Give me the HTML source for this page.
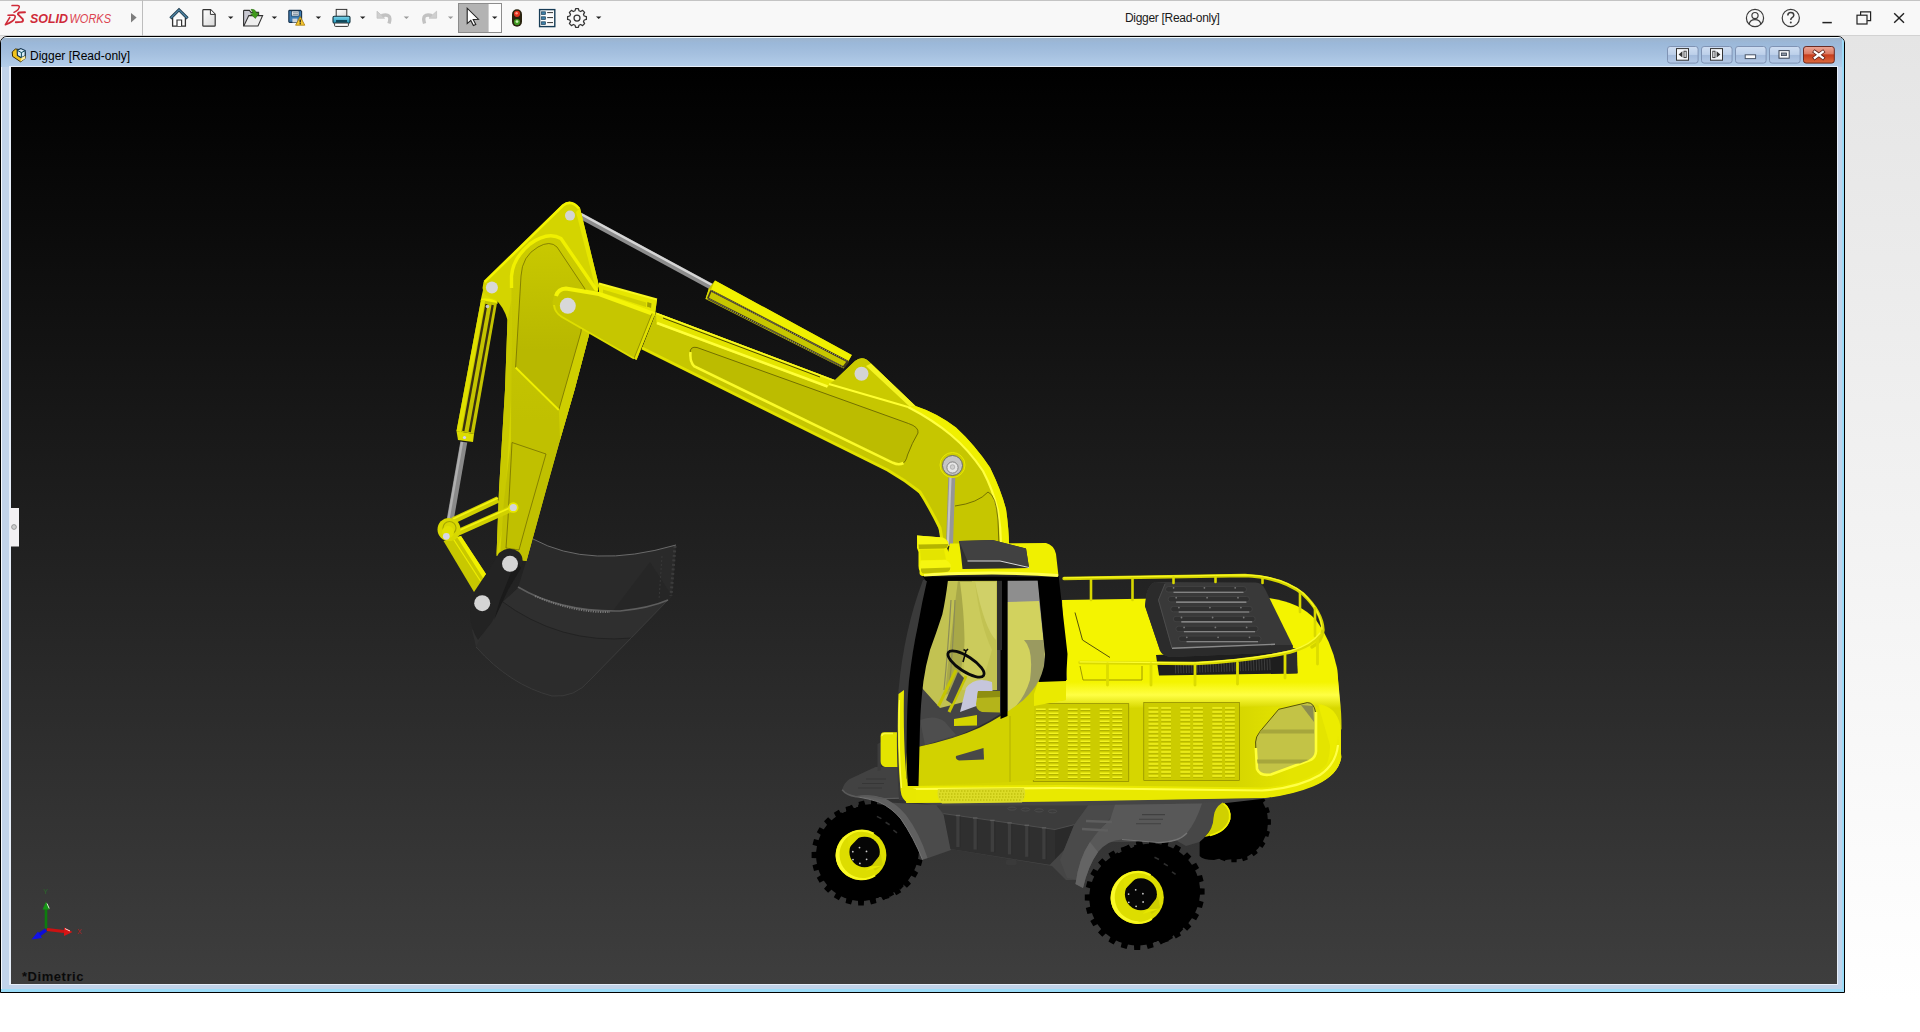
<!DOCTYPE html>
<html><head><meta charset="utf-8"><title>SOLIDWORKS</title>
<style>
*{margin:0;padding:0;box-sizing:border-box}
html,body{width:1920px;height:1032px;overflow:hidden;background:linear-gradient(#e5e5e5 36px,#ffffff 1000px);font-family:"Liberation Sans",sans-serif}
#top{position:absolute;left:0;top:0;width:1920px;height:36px;background:#f8f8f8;border-top:1px solid #c4c4c4;border-bottom:1px solid #d2d2d2}
#sep{position:absolute;left:142px;top:0;width:1px;height:36px;background:#bdbdbd}
#apptitle{position:absolute;left:1125px;top:11px;font-size:12px;color:#1a1a1a;letter-spacing:-.3px;white-space:nowrap}
#child{position:absolute;left:0;top:36px;width:1845px;height:957px;background:#c1d3ea;border:1px solid #000;border-radius:7px 7px 0 0;overflow:hidden}
#childtitle{position:absolute;left:0;top:0;width:1843px;height:30px;background:linear-gradient(#9db4cd 0,#9bb8d9 18%,#a5c0df 55%,#b4ceea 100%);border-top:1px solid #f2fcff}
#ctext{position:absolute;left:30px;top:48.5px;font-size:12px;color:#000;white-space:nowrap}
#vp{position:absolute;left:11px;top:67px;width:1826px;height:917px;background:linear-gradient(#000 0,#3e3e3e 100%);box-shadow:0 0 0 1px #e6eef9,-1px 0 0 1px #e6eef9}
#child:before{content:'';position:absolute;left:0;top:1px;width:1px;height:960px;background:#f4f8fd}
#child:after{content:'';position:absolute;left:0;top:0;width:1843px;height:955px;border-right:2px solid #9bdcf8;border-bottom:3px solid #9bdcf8;box-sizing:border-box}
#svgmain{position:absolute;left:0;top:0;width:1920px;height:1032px}
#dim{position:absolute;left:22px;top:969px;font-size:13px;font-weight:bold;color:#0a0a0a;letter-spacing:.55px}
</style></head><body>
<div id="top"></div><div id="sep"></div>
<div id="apptitle">Digger [Read-only]</div>
<div id="child"><div id="childtitle"></div></div>
<div id="ctext">Digger [Read-only]</div>
<div id="vp"></div>
<svg id="svgmain" viewBox="0 0 1920 1032">
<defs>
<linearGradient id="gbtn" x1="0" y1="0" x2="0" y2="1"><stop offset="0" stop-color="#cfdef2"/><stop offset=".48" stop-color="#bdd0ea"/><stop offset=".52" stop-color="#a3bbdc"/><stop offset="1" stop-color="#b4c9e6"/></linearGradient>
<linearGradient id="gred" x1="0" y1="0" x2="0" y2="1"><stop offset="0" stop-color="#eba697"/><stop offset=".45" stop-color="#dc7a62"/><stop offset=".5" stop-color="#c73c1c"/><stop offset="1" stop-color="#dc6b40"/></linearGradient>
<linearGradient id="gdoc" x1="0" y1="0" x2="1" y2="1"><stop offset="0" stop-color="#fff"/><stop offset="1" stop-color="#d8d8d8"/></linearGradient>
<linearGradient id="gprn" x1="0" y1="0" x2="0" y2="1"><stop offset="0" stop-color="#7fd8ee"/><stop offset="1" stop-color="#1c8fb4"/></linearGradient>
</defs>
<g id="logo" fill="none" stroke="#cf2a38" stroke-linecap="round" stroke-linejoin="round">
<path d="M12 5.6 L17.4 5.4 Q19.8 5.6 19.2 7.4 Q18.6 9.6 16.6 10.8 L14 12.3" stroke-width="1.5"/>
<path d="M8 15.3 L13.2 15 Q15.6 15.4 15.1 17.4 Q14.6 19.6 12.6 21 Q10 23 5.4 24.7 L9.8 17.4" stroke-width="1.6"/>
<path d="M25 12.3 L19.8 12.5 Q17.6 12.9 18 14.4 L22.8 19.2 Q23.6 21.4 21.4 21.9 L15.8 22.3" stroke-width="1.9"/>
</g>
<text x="30" y="23.2" font-family="Liberation Sans, sans-serif" font-size="12.2" font-weight="bold" font-style="italic" fill="#cf2a38" textLength="38" lengthAdjust="spacingAndGlyphs">SOLID</text>
<text x="69.5" y="23.2" font-family="Liberation Sans, sans-serif" font-size="12.2" font-style="italic" fill="#dc4450" textLength="41.5" lengthAdjust="spacingAndGlyphs">WORKS</text>
<path d="M131 13 L136.6 17.6 L131 22.4 Z" fill="#7d7d7d"/>
<!-- home -->
<g id="home">
<path d="M172.6 18 V26.2 H185.4 V18" fill="#fff" stroke="#333" stroke-width="1.3"/>
<path d="M177 26 V20 H181.6 V26" fill="#fff" stroke="#333" stroke-width="1.2"/>
<path d="M170.4 18.4 L179 9.8 L187.6 18.4" fill="none" stroke="#1f3a4c" stroke-width="3" stroke-linejoin="miter"/>
<path d="M170.8 18 L179 9.9 L187.2 18" fill="none" stroke="#4f86a6" stroke-width="1.3"/>
</g>
<!-- new doc -->
<path d="M203.6 9.6 H210.6 L215.2 14.2 V25.4 Q215.2 26.2 214.4 26.2 H203.6 Q202.8 26.2 202.8 25.4 V10.4 Q202.8 9.6 203.6 9.6 Z" fill="url(#gdoc)" stroke="#333" stroke-width="1.2"/>
<path d="M210.4 9.8 V14.4 H215" fill="#fff" stroke="#333" stroke-width="1"/>
<path d="M228 16.4 H233.4 L230.7 19 Z" fill="#222"/>
<!-- open -->
<g id="open">
<path d="M243.6 26 V11 Q243.6 10.4 244.2 10.4 H249.4 L251 12.4 H258.6 V15.4" fill="#c9c9d2" stroke="#333" stroke-width="1.1"/>
<path d="M243.8 26 L248.8 15.6 H262.6 L258 26 Z" fill="#eeeeee" stroke="#333" stroke-width="1.1"/>
<path d="M251 9.4 Q255.6 9 256.4 13.2 L258.8 13 L255.4 18.4 L250.6 14 L253 13.6 Q252.8 11.4 251 9.4 Z" fill="#3f9a1a" stroke="#2a6e10" stroke-width="0.6"/>
</g>
<path d="M271.7 16.4 H277.1 L274.4 19 Z" fill="#222"/>
<!-- save -->
<g id="save">
<path d="M289.6 10.4 H300.6 L301.6 11.4 V21.6 Q301.6 22.4 300.8 22.4 H289.6 Q288.8 22.4 288.8 21.6 V11.2 Q288.8 10.4 289.6 10.4 Z" fill="#3f7db4" stroke="#17324c" stroke-width="1.1"/>
<rect x="291.6" y="11" width="7.4" height="5" fill="#e8eef4" stroke="#17324c" stroke-width="0.6"/>
<path d="M292.8 12.8 H298 M292.8 14.4 H298" stroke="#55677a" stroke-width="0.7"/>
<rect x="292.4" y="18.6" width="5" height="3.8" fill="#cfd6dc"/>
<path d="M300.2 16.6 L304.8 25.2 H295.6 Z" fill="#f7c933" stroke="#a87a08" stroke-width="0.8" stroke-linejoin="round"/>
<path d="M300.2 19.4 V22.4" stroke="#222" stroke-width="1.3"/><circle cx="300.2" cy="23.8" r="0.75" fill="#222"/>
</g>
<path d="M315.7 16.4 H321.1 L318.4 19 Z" fill="#222"/>
<!-- print -->
<g id="print">
<rect x="336.2" y="9.4" width="10.6" height="8" fill="url(#gdoc)" stroke="#333" stroke-width="1"/>
<rect x="333" y="16.2" width="17" height="7" rx="1.4" fill="url(#gprn)" stroke="#10303c" stroke-width="1.1"/>
<rect x="336" y="20" width="11" height="2.2" fill="#0f4a5e"/>
<rect x="334.6" y="23" width="13.8" height="3.4" rx=".8" fill="#fff" stroke="#333" stroke-width="1"/>
</g>
<path d="M360 16.4 H365.4 L362.7 19 Z" fill="#222"/>
<!-- undo / redo (disabled) -->
<g fill="none" stroke="#c2c2c2" stroke-linejoin="round">
<path d="M381.5 15.6 Q392.5 12.6 389 23.6" stroke-width="3.4"/>
<path d="M377 11.2 L377 18.2 L384.6 18.2 Z" fill="#cfcfcf" stroke-width=".8"/>
<path d="M432.1 15.6 Q421.1 12.6 424.6 23.6" stroke-width="3.4"/>
<path d="M436.6 11.2 L436.6 18.2 L429 18.2 Z" fill="#cfcfcf" stroke-width=".8"/>
</g>
<path d="M403.7 16.4 H409.1 L406.4 19 Z" fill="#9a9a9a"/>
<path d="M447.9 16.4 H453.3 L450.6 19 Z" fill="#9a9a9a"/>
<!-- select button -->
<rect x="458.5" y="3.5" width="43" height="29" fill="#fcfcfc" stroke="#8c8c8c" stroke-width="1"/>
<rect x="459" y="4" width="29.6" height="28" fill="#b3b3b3"/>
<path d="M467.2 8.2 L467.2 23.6 L470.8 20.4 L473.4 25.6 L475.8 24.4 L473.2 19.4 L478.4 19.2 Z" fill="#fff" stroke="#222" stroke-width="1.1" stroke-linejoin="miter"/>
<path d="M492 16.4 H497.4 L494.7 19 Z" fill="#222"/>
<!-- traffic light -->
<rect x="512" y="9.2" width="10" height="17.6" rx="5" fill="#2a2410"/>
<circle cx="517" cy="13.8" r="3.1" fill="#e2321e"/><circle cx="516.6" cy="13.2" r="1.2" fill="#ff9a8a"/>
<circle cx="517" cy="22" r="3.1" fill="#3f9a22"/><circle cx="517" cy="21.6" r="1.4" fill="#c9efb0"/>
<!-- options list -->
<rect x="539.6" y="9.6" width="15.2" height="17" fill="#fbfbfb" stroke="#173c56" stroke-width="1.4"/>
<g fill="#3d7ea6" stroke="#173c56" stroke-width=".7"><rect x="541.6" y="11.8" width="3.8" height="2.6"/><rect x="541.6" y="16.8" width="3.8" height="2.6"/><rect x="541.6" y="21.8" width="3.8" height="2.6"/></g>
<path d="M547.2 12.6 H553 M547.2 17.6 H553 M547.2 22.6 H553" stroke="#333" stroke-width="1"/>
<!-- gear -->
<g id="gear" fill="none" stroke="#333" stroke-width="1.25">
<path d="M575.6 10 H578.4 L579 12.2 L580.6 12.9 L582.6 11.8 L584.6 13.8 L583.5 15.8 L584.2 17.4 L586.4 18 V20.8 L584.2 21.4 L583.5 23 L584.6 25 L582.6 27 L580.6 25.9 L579 26.6 L578.4 28.8 H575.6 L575 26.6 L573.4 25.9 L571.4 27 L569.4 25 L570.5 23 L569.8 21.4 L567.6 20.8 V18 L569.8 17.4 L570.5 15.8 L569.4 13.8 L571.4 11.8 L573.4 12.9 L575 12.2 Z" transform="translate(0,-1.4)" stroke-linejoin="round"/>
<circle cx="577" cy="18" r="3"/>
</g>
<path d="M596 16.4 H601.4 L598.7 19 Z" fill="#222"/>
<!-- right side app icons -->
<g fill="none" stroke="#3c3c3c" stroke-width="1.2">
<circle cx="1755" cy="18" r="8.6"/><circle cx="1755" cy="15.6" r="3.1"/><path d="M1749.2 24.2 Q1750 19.6 1755 19.6 Q1760 19.6 1760.8 24.2"/>
<circle cx="1790.8" cy="18" r="8.6"/>
<path d="M1787.8 15.4 Q1787.8 12.6 1790.8 12.6 Q1793.8 12.6 1793.8 15.2 Q1793.8 16.8 1791.8 17.8 Q1790.8 18.4 1790.8 20" stroke-width="1.5"/>
</g>
<circle cx="1790.8" cy="22.6" r="1" fill="#3c3c3c"/>
<path d="M1822.4 22.6 H1831.8" stroke="#222" stroke-width="1.5"/>
<path d="M1860.6 15 V11.8 H1870.6 V20.6 H1867.2" fill="none" stroke="#222" stroke-width="1.2"/>
<rect x="1857" y="15.2" width="10" height="8.8" fill="none" stroke="#222" stroke-width="1.2"/>
<path d="M1894.2 13.2 L1904 22.8 M1904 13.2 L1894.2 22.8" stroke="#222" stroke-width="1.4"/>
<!-- child window buttons -->
<g id="cbtn">
<rect x="1667.5" y="46.5" width="30.6" height="16.6" rx="2.6" fill="url(#gbtn)" stroke="#7f93b4" stroke-width="1"/>
<rect x="1701.5" y="46.5" width="30.6" height="16.6" rx="2.6" fill="url(#gbtn)" stroke="#7f93b4" stroke-width="1"/>
<rect x="1735.5" y="46.5" width="30.6" height="16.6" rx="2.6" fill="url(#gbtn)" stroke="#7f93b4" stroke-width="1"/>
<rect x="1769.5" y="46.5" width="30.6" height="16.6" rx="2.6" fill="url(#gbtn)" stroke="#7f93b4" stroke-width="1"/>
<rect x="1803.5" y="46.5" width="30.8" height="16.6" rx="2.6" fill="url(#gred)" stroke="#6a2a22" stroke-width="1"/>
<rect x="1676.5" y="48.6" width="12" height="11.6" fill="#f6f8fb" stroke="#333" stroke-width="1"/>
<path d="M1682.4 51.2 V57.6 L1678.6 54.4 Z" fill="#333"/><rect x="1684" y="51.2" width="2.2" height="6.4" fill="none" stroke="#333" stroke-width=".9"/>
<rect x="1710.5" y="48.6" width="12" height="11.6" fill="#f6f8fb" stroke="#333" stroke-width="1"/>
<path d="M1716.6 51.2 V57.6 L1720.4 54.4 Z" fill="#333"/><rect x="1712.8" y="51.2" width="2.2" height="6.4" fill="none" stroke="#333" stroke-width=".9"/>
<rect x="1745.2" y="54.8" width="10.4" height="3.8" fill="#fafbfd" stroke="#4a5668" stroke-width="1"/>
<rect x="1779" y="50.6" width="10.2" height="7.6" fill="#fafbfd" stroke="#3a4454" stroke-width="1"/>
<rect x="1781.6" y="53" width="5" height="2.6" fill="#8a94a4" stroke="#3a4454" stroke-width=".8"/>
<path d="M1814.8 51.8 L1822.8 57.8 M1822.8 51.8 L1814.8 57.8" stroke="#5a2018" stroke-width="3.8" stroke-linecap="square"/>
<path d="M1814.8 51.8 L1822.8 57.8 M1822.8 51.8 L1814.8 57.8" stroke="#fff" stroke-width="2.3" stroke-linecap="square"/>
</g>
<!-- child doc icon -->
<g id="docicon">
<path d="M12.2 52 L15.4 49 L20.2 49.6 L25.4 52.4 L25.2 58.4 L20.6 61.8 L12.6 56.4 Z" fill="#f2c41c" stroke="#3c2c00" stroke-width="1"/>
<path d="M17.2 50.2 L20.8 48.6 L25.2 50.6 L25.2 55.8 L21.4 57.8 L17.4 55.4 Z" fill="#d6ecf8" stroke="#0c2c4a" stroke-width="1.1"/>
<path d="M17.4 50.4 L21.4 52.6 L25 50.8 M21.4 52.6 V57.6" stroke="#0c4a5a" stroke-width="1" fill="none"/>
<path d="M21.4 57.8 L25.2 55.8 L25.2 58.4 L20.8 61.6 Z" fill="#fff0a0"/>
</g>
<!-- left handle -->
<rect x="10" y="508" width="9" height="38.5" fill="#f3f1f3"/>
<circle cx="14" cy="527" r="2.4" fill="#cfcfcf" stroke="#8a8a8a" stroke-width=".8"/>
<!-- triad -->
<g id="triad">
<path d="M46 928.5 V906" stroke="#0d7d0d" stroke-width="2.6"/>
<path d="M46 901.5 L49.5 909.5 H42.5 Z" fill="#149414"/>
<path d="M47 903.5 L49.2 908.5" stroke="#d9f2d0" stroke-width="1"/>
<path d="M47 929.5 L64 931.5" stroke="#cc1111" stroke-width="2.8"/>
<path d="M72.5 932 L64 927.5 V936 Z" fill="#d81414"/>
<path d="M65 928.6 L70 931" stroke="#ffd6d6" stroke-width="1"/>
<path d="M46 930 L36 937" stroke="#0c0cd8" stroke-width="3.4"/>
<path d="M31.5 939.5 L38 931.5 L42 938 Z" fill="#1212e6"/>
<text x="43.2" y="894" font-family="Liberation Sans, sans-serif" font-size="7" fill="#2a6a2a">Y</text>
<text x="77" y="934" font-family="Liberation Sans, sans-serif" font-size="7" fill="#b02020">X</text>
</g>

<g id="rearwheel">
<path d="M1265.9 819.0 L1270.9 819.2 L1270.9 824.8 L1265.9 825.0 Z M1265.2 829.9 L1269.9 831.8 L1268.3 837.1 L1263.5 835.6 Z M1261.4 840.0 L1265.4 843.4 L1262.4 847.9 L1258.2 844.9 Z M1255.0 848.4 L1257.8 852.9 L1253.6 856.2 L1250.5 851.9 Z M1246.5 854.2 L1247.8 859.4 L1243.0 861.2 L1241.2 856.0 Z M1236.8 856.8 L1236.6 862.3 L1231.4 862.3 L1231.2 856.8 Z M1226.8 856.0 L1225.0 861.2 L1220.2 859.4 L1221.5 854.2 Z M1250.5 792.1 L1253.6 787.8 L1257.8 791.1 L1255.0 795.6 Z M1258.2 799.1 L1262.4 796.1 L1265.4 800.6 L1261.4 804.0 Z M1263.5 808.4 L1268.3 806.9 L1269.9 812.2 L1265.2 814.1 Z" fill="#000"/>
<ellipse cx="1234" cy="822" rx="34" ry="37.5" fill="#000"/>
<ellipse cx="1226" cy="824" rx="27" ry="36" fill="#000"/>
<path d="M1199.6 830 L1199.6 856 Q1203 860 1214 860 L1245 852 L1225 820 Z" fill="#000"/>
</g>
<g id="chassis">
<path d="M905 800 L1270 798 L1200 806 L1180 830 L1160 842 L1100 842 L1078 880 L1066 880 L1052 866 L950 849 L937 806 Z" fill="#454545"/>
<g id="wheels">
<path d="M917.4 846.8 L923.4 847.1 L923.4 852.9 L917.4 853.2 Z M916.8 858.4 L922.5 860.3 L921.0 865.9 L915.1 864.6 Z M913.2 869.4 L918.2 872.7 L915.4 877.8 L910.1 875.0 Z M906.9 879.1 L911.0 883.7 L906.9 887.8 L902.5 883.7 Z M898.4 886.9 L901.2 892.3 L896.2 895.2 L893.0 890.1 Z M888.3 892.1 L889.5 898.0 L884.0 899.6 L882.2 893.7 Z M834.8 830.6 L829.8 827.3 L832.6 822.2 L837.9 825.0 Z M841.1 820.9 L837.0 816.3 L841.1 812.2 L845.5 816.3 Z M849.6 813.1 L846.8 807.7 L851.8 804.8 L855.0 809.9 Z M859.7 807.9 L858.5 802.0 L864.0 800.4 L865.8 806.3 Z M870.9 805.6 L871.2 799.5 L876.8 799.5 L877.1 805.6 Z M882.2 806.3 L884.0 800.4 L889.5 802.0 L888.3 807.9 Z M893.0 809.9 L896.2 804.8 L901.2 807.7 L898.4 813.1 Z M902.5 816.3 L906.9 812.2 L911.0 816.3 L906.9 820.9 Z M910.1 825.0 L915.4 822.2 L918.2 827.3 L913.2 830.6 Z M915.1 835.4 L921.0 834.1 L922.5 839.7 L916.8 841.6 Z" fill="#000"/>
<ellipse cx="861.0" cy="855.0" rx="44.9" ry="45.9" fill="#000"/>
<ellipse cx="862.6" cy="854.4" rx="44.9" ry="45.9" fill="#000"/>
<ellipse cx="864.2" cy="853.8" rx="44.9" ry="45.9" fill="#000"/>
<ellipse cx="865.9" cy="853.1" rx="44.9" ry="45.9" fill="#000"/>
<ellipse cx="867.5" cy="852.5" rx="44.9" ry="45.9" fill="#000"/>
<ellipse cx="869.1" cy="851.9" rx="44.9" ry="45.9" fill="#000"/>
<ellipse cx="870.8" cy="851.2" rx="44.9" ry="45.9" fill="#000"/>
<ellipse cx="872.4" cy="850.6" rx="44.9" ry="45.9" fill="#000"/>
<ellipse cx="874.0" cy="850.0" rx="44.9" ry="45.9" fill="#000"/>
<path d="M900.2 874.4 L905.2 877.7 L902.4 882.8 L897.1 880.0 Z M893.9 884.1 L898.0 888.7 L893.9 892.8 L889.5 888.7 Z M885.4 891.9 L888.2 897.3 L883.2 900.2 L880.0 895.1 Z M875.3 897.1 L876.5 903.0 L871.0 904.6 L869.2 898.7 Z M864.1 899.4 L863.8 905.5 L858.2 905.5 L857.9 899.4 Z M852.8 898.7 L851.0 904.6 L845.5 903.0 L846.7 897.1 Z M842.0 895.1 L838.8 900.2 L833.8 897.3 L836.6 891.9 Z M832.5 888.7 L828.1 892.8 L824.0 888.7 L828.1 884.1 Z M824.9 880.0 L819.6 882.8 L816.8 877.7 L821.8 874.4 Z M819.9 869.6 L814.0 870.9 L812.5 865.3 L818.2 863.4 Z M817.6 858.2 L811.6 857.9 L811.6 852.1 L817.6 851.8 Z M818.2 846.6 L812.5 844.7 L814.0 839.1 L819.9 840.4 Z M821.8 835.6 L816.8 832.3 L819.6 827.2 L824.9 830.0 Z M828.1 825.9 L824.0 821.3 L828.1 817.2 L832.5 821.3 Z M836.6 818.1 L833.8 812.7 L838.8 809.8 L842.0 814.9 Z M846.7 812.9 L845.5 807.0 L851.0 805.4 L852.8 811.3 Z M857.9 810.6 L858.2 804.5 L863.8 804.5 L864.1 810.6 Z M869.2 811.3 L871.0 805.4 L876.5 807.0 L875.3 812.9 Z" fill="#000"/>
<path d="M911.0 849.6 L916.4 849.9 L916.4 855.1 L911.0 855.4 Z M910.2 861.2 L915.4 862.9 L914.1 868.0 L908.7 866.8 Z M906.6 872.2 L911.2 875.2 L908.6 879.8 L903.7 877.2 Z M900.2 881.9 L903.9 886.0 L900.3 889.7 L896.2 886.0 Z M891.7 889.5 L894.2 894.5 L889.7 897.1 L886.8 892.4 Z M886.8 812.6 L889.7 807.9 L894.2 810.5 L891.7 815.5 Z M896.2 819.0 L900.3 815.3 L903.9 819.0 L900.2 823.1 Z M903.7 827.8 L908.6 825.2 L911.2 829.8 L906.6 832.8 Z M908.7 838.2 L914.1 837.0 L915.4 842.1 L910.2 843.8 Z" fill="#000"/>
<path d="M876.9 816.4 l4.5 2.2 M885.6 822.3 l4 2.4 M893.4 830.2 l3.6 2.6" stroke="#2e2e2e" stroke-width="1.6" fill="none"/>
<ellipse cx="861" cy="855" rx="25.4" ry="25.019" fill="#dddd00"/>
<path d="M873.7 833.7 A24.3 24.3 0 1 0 875.0 875.3" fill="none" stroke="#f6f618" stroke-width="2.2"/>
<path d="M853.4 833.2 A23.368 23.368 0 0 0 863.5 877.9 A19.05 19.05 0 0 1 853.4 833.2 Z" fill="#fafa28"/>
<ellipse cx="864.6" cy="852.0" rx="15.2" ry="15.2" fill="#060606"/>
<path d="M847.8 837.2 L861.5 834.7 L848.3 848.4 Z" fill="#e0e000"/>
<path d="M880.8 854.0 L871.2 866.2 L875.0 870.7 L882.8 865.2 Z" fill="#cfcf00"/>
<path d="M871.2 866.2 L882.8 865.7 L866.1 870.7 Z" fill="#e6e600"/>
<circle cx="866.6" cy="859.3" r="0.9" fill="#c8c8c8"/>
<circle cx="859.9" cy="863.4" r="0.9" fill="#c8c8c8"/>
<circle cx="853.0" cy="859.6" r="0.9" fill="#c8c8c8"/>
<circle cx="852.8" cy="851.7" r="0.9" fill="#c8c8c8"/>
<circle cx="859.5" cy="847.6" r="0.9" fill="#c8c8c8"/>
<circle cx="866.5" cy="851.4" r="0.9" fill="#c8c8c8"/>
<path d="M1198.5 888.2 L1204.6 888.5 L1204.6 894.5 L1198.5 894.8 Z M1197.8 900.3 L1203.6 902.1 L1202.0 908.0 L1196.1 906.7 Z M1194.0 911.8 L1199.1 915.1 L1196.1 920.3 L1190.7 917.6 Z M1187.3 921.9 L1191.4 926.4 L1187.1 930.7 L1182.6 926.6 Z M1178.3 930.0 L1181.0 935.4 L1175.8 938.4 L1172.5 933.3 Z M1167.4 935.4 L1168.7 941.3 L1162.8 942.9 L1161.0 937.1 Z M1110.4 871.2 L1105.3 867.9 L1108.3 862.7 L1113.7 865.4 Z M1117.1 861.1 L1113.0 856.6 L1117.3 852.3 L1121.8 856.4 Z M1126.1 853.0 L1123.4 847.6 L1128.6 844.6 L1131.9 849.7 Z M1137.0 847.6 L1135.7 841.7 L1141.6 840.1 L1143.4 845.9 Z M1148.9 845.2 L1149.2 839.1 L1155.2 839.1 L1155.5 845.2 Z M1161.0 845.9 L1162.8 840.1 L1168.7 841.7 L1167.4 847.6 Z M1172.5 849.7 L1175.8 844.6 L1181.0 847.6 L1178.3 853.0 Z M1182.6 856.4 L1187.1 852.3 L1191.4 856.6 L1187.3 861.1 Z M1190.7 865.4 L1196.1 862.7 L1199.1 867.9 L1194.0 871.2 Z M1196.1 876.3 L1202.0 875.0 L1203.6 880.9 L1197.8 882.7 Z" fill="#000"/>
<ellipse cx="1137.2" cy="897.5" rx="47.9" ry="47.9" fill="#000"/>
<ellipse cx="1139.1" cy="896.8" rx="47.9" ry="47.9" fill="#000"/>
<ellipse cx="1141.0" cy="896.0" rx="47.9" ry="47.9" fill="#000"/>
<ellipse cx="1142.8" cy="895.2" rx="47.9" ry="47.9" fill="#000"/>
<ellipse cx="1144.7" cy="894.5" rx="47.9" ry="47.9" fill="#000"/>
<ellipse cx="1146.6" cy="893.8" rx="47.9" ry="47.9" fill="#000"/>
<ellipse cx="1148.5" cy="893.0" rx="47.9" ry="47.9" fill="#000"/>
<ellipse cx="1150.3" cy="892.2" rx="47.9" ry="47.9" fill="#000"/>
<ellipse cx="1152.2" cy="891.5" rx="47.9" ry="47.9" fill="#000"/>
<path d="M1179.0 917.8 L1184.1 921.1 L1181.1 926.3 L1175.7 923.6 Z M1172.3 927.9 L1176.4 932.4 L1172.1 936.7 L1167.6 932.6 Z M1163.3 936.0 L1166.0 941.4 L1160.8 944.4 L1157.5 939.3 Z M1152.4 941.4 L1153.7 947.3 L1147.8 948.9 L1146.0 943.1 Z M1140.5 943.8 L1140.2 949.9 L1134.2 949.9 L1133.9 943.8 Z M1128.4 943.1 L1126.6 948.9 L1120.7 947.3 L1122.0 941.4 Z M1116.9 939.3 L1113.6 944.4 L1108.4 941.4 L1111.1 936.0 Z M1106.8 932.6 L1102.3 936.7 L1098.0 932.4 L1102.1 927.9 Z M1098.7 923.6 L1093.3 926.3 L1090.3 921.1 L1095.4 917.8 Z M1093.3 912.7 L1087.4 914.0 L1085.8 908.1 L1091.6 906.3 Z M1090.9 900.8 L1084.8 900.5 L1084.8 894.5 L1090.9 894.2 Z M1091.6 888.7 L1085.8 886.9 L1087.4 881.0 L1093.3 882.3 Z M1095.4 877.2 L1090.3 873.9 L1093.3 868.7 L1098.7 871.4 Z M1102.1 867.1 L1098.0 862.6 L1102.3 858.3 L1106.8 862.4 Z M1111.1 859.0 L1108.4 853.6 L1113.6 850.6 L1116.9 855.7 Z M1122.0 853.6 L1120.7 847.7 L1126.6 846.1 L1128.4 851.9 Z M1133.9 851.2 L1134.2 845.1 L1140.2 845.1 L1140.5 851.2 Z M1146.0 851.9 L1147.8 846.1 L1153.7 847.7 L1152.4 853.6 Z" fill="#000"/>
<path d="M1191.1 891.5 L1196.6 891.8 L1196.6 897.2 L1191.1 897.5 Z M1190.3 903.6 L1195.6 905.3 L1194.2 910.6 L1188.7 909.4 Z M1186.4 915.1 L1191.0 918.1 L1188.3 922.8 L1183.3 920.3 Z M1179.6 925.1 L1183.3 929.3 L1179.5 933.1 L1175.3 929.4 Z M1170.5 933.1 L1173.0 938.1 L1168.3 940.8 L1165.3 936.2 Z M1165.3 852.8 L1168.3 848.2 L1173.0 850.9 L1170.5 855.9 Z M1175.3 859.6 L1179.5 855.9 L1183.3 859.7 L1179.6 863.9 Z M1183.3 868.7 L1188.3 866.2 L1191.0 870.9 L1186.4 873.9 Z M1188.7 879.6 L1194.2 878.4 L1195.6 883.7 L1190.3 885.4 Z" fill="#000"/>
<path d="M1154.5 857.3 l4.5 2.2 M1163.8 863.5 l4 2.4 M1172.0 871.8 l3.6 2.6" stroke="#2e2e2e" stroke-width="1.6" fill="none"/>
<ellipse cx="1137.2" cy="897.5" rx="26.6" ry="26.201" fill="#dddd00"/>
<path d="M1150.5 875.2 A25.5 25.5 0 1 0 1151.8 918.8" fill="none" stroke="#f6f618" stroke-width="2.2"/>
<path d="M1129.2 874.6 A24.472 24.472 0 0 0 1139.9 921.4 A19.95 19.95 0 0 1 1129.2 874.6 Z" fill="#fafa28"/>
<ellipse cx="1140.9" cy="894.3" rx="16.0" ry="16.0" fill="#060606"/>
<path d="M1123.4 878.9 L1137.7 876.2 L1123.9 890.6 Z" fill="#e0e000"/>
<path d="M1157.9 896.4 L1147.8 909.2 L1151.8 914.0 L1160.1 908.1 Z" fill="#cfcf00"/>
<path d="M1147.8 909.2 L1160.1 908.7 L1142.5 914.0 Z" fill="#e6e600"/>
<circle cx="1143.1" cy="902.0" r="0.9" fill="#c8c8c8"/>
<circle cx="1136.1" cy="906.3" r="0.9" fill="#c8c8c8"/>
<circle cx="1128.8" cy="902.3" r="0.9" fill="#c8c8c8"/>
<circle cx="1128.6" cy="894.1" r="0.9" fill="#c8c8c8"/>
<circle cx="1135.7" cy="889.8" r="0.9" fill="#c8c8c8"/>
<circle cx="1142.9" cy="893.7" r="0.9" fill="#c8c8c8"/>
</g>
<path d="M879 802 L937 805 L944 816 L951 850 L922.5 860 Q914 838 900 818 Q890 806 879 802 Z" fill="#4b4b4b"/>
<path d="M856 796.5 Q870 799 879 802 Q892 808 901 819 Q914 838 922.5 859.6 L927.5 858 Q920 834 906 815 Q896 803 882 797 Q868 793 856 793 Z" fill="#606060"/>
<path d="M856 796.5 Q870 799 879 802 Q892 808 901 819 Q914 838 922.5 859.6" fill="none" stroke="#747474" stroke-width="1"/>
<path d="M842.2 789.8 Q844 783 849.2 779.3 L875.4 767.1 L903.3 766.2 L905 797 L882 797.5 Q868 793.5 856 796.8 Q846 795 842.2 789.8 Z" fill="#424242"/>
<path d="M842.2 789.8 Q846 795 856 796.8 Q868 794.5 882 798.5 L905 798" fill="none" stroke="#5a5a5a" stroke-width="1.6"/>
<path d="M866 779 H886 M862 783.5 H884 M858 788 H882" stroke="#363636" stroke-width="1.2" fill="none"/>
<path d="M877.5 744 L881 742 L881 770 L877.5 771 Z" fill="#3c3c3c"/>
<path d="M884 732.2 L901.5 732.2 L901.5 767 L885 767 Q880.6 766 880.6 761 L880.6 736.5 Q880.6 732.2 884 732.2 Z" fill="#e4e400"/>
<path d="M882 736 Q882 733.5 885 733.5 L893 733.5" stroke="#f8f840" stroke-width="1.4" fill="none"/>
<path d="M936.4 805.5 L1088.2 805.5 L1074.2 824.7 L1055 829.5 L943.4 813.6 Z" fill="#3c3c3c"/>
<path d="M943.4 813.6 L1055 829.5 L1055 859.6 L1049.8 864.8 L950.4 849.1 Z" fill="#2f2f2f"/>
<path d="M1055 829.5 L1074.2 824.7 L1064 850 L1055 859.6 Z" fill="#2a2a2a"/>
<path d="M943.4 813.6 L1055 829.5 L1074.2 824.7" fill="none" stroke="#505050" stroke-width="0.9"/>
<path d="M958.0 815.5 V847.0" stroke="#3e3e3e" stroke-width="3.4" fill="none"/>
<path d="M960.2 816.5 V847.3" stroke="#2c2c2c" stroke-width="0.9" fill="none"/>
<path d="M955.8 815.5 h4.4" stroke="#5c5c5c" stroke-width="1.4" fill="none"/>
<path d="M975.2 818.0 V849.5" stroke="#3e3e3e" stroke-width="3.4" fill="none"/>
<path d="M977.4 819.0 V849.8" stroke="#2c2c2c" stroke-width="0.9" fill="none"/>
<path d="M973.0 818.0 h4.4" stroke="#5c5c5c" stroke-width="1.4" fill="none"/>
<path d="M992.4 820.4 V851.9" stroke="#3e3e3e" stroke-width="3.4" fill="none"/>
<path d="M994.6 821.4 V852.2" stroke="#2c2c2c" stroke-width="0.9" fill="none"/>
<path d="M990.2 820.4 h4.4" stroke="#5c5c5c" stroke-width="1.4" fill="none"/>
<path d="M1009.6 822.9 V854.4" stroke="#3e3e3e" stroke-width="3.4" fill="none"/>
<path d="M1011.8 823.9 V854.6" stroke="#2c2c2c" stroke-width="0.9" fill="none"/>
<path d="M1007.4 822.9 h4.4" stroke="#5c5c5c" stroke-width="1.4" fill="none"/>
<path d="M1026.8 825.3 V856.8" stroke="#3e3e3e" stroke-width="3.4" fill="none"/>
<path d="M1029.0 826.3 V857.1" stroke="#2c2c2c" stroke-width="0.9" fill="none"/>
<path d="M1024.6 825.3 h4.4" stroke="#5c5c5c" stroke-width="1.4" fill="none"/>
<path d="M1044.0 827.8 V859.2" stroke="#3e3e3e" stroke-width="3.4" fill="none"/>
<path d="M1046.2 828.8 V859.5" stroke="#2c2c2c" stroke-width="0.9" fill="none"/>
<path d="M1041.8 827.8 h4.4" stroke="#5c5c5c" stroke-width="1.4" fill="none"/>
<ellipse cx="1012.0" cy="808.6" rx="4.2" ry="1.6" fill="none" stroke="#4e4e4e" stroke-width="0.8"/>
<ellipse cx="1025.5" cy="809.5" rx="4.2" ry="1.6" fill="none" stroke="#4e4e4e" stroke-width="0.8"/>
<ellipse cx="1039.0" cy="810.4" rx="4.2" ry="1.6" fill="none" stroke="#4e4e4e" stroke-width="0.8"/>
<ellipse cx="1052.5" cy="811.3" rx="4.2" ry="1.6" fill="none" stroke="#4e4e4e" stroke-width="0.8"/>
<rect x="1006" y="859.5" width="10.5" height="5.8" rx="2" fill="#3a3a3a"/>
<path d="M1088.2 805.5 L1120 804.5 L1110 818 L1090 842 L1078 880 L1067 878 L1060 860 L1074.2 824.7 Z" fill="#4a4a4a"/>
<path d="M1176 803 L1224 802 L1214 814 L1213 826 L1204 838 L1199.5 842 L1186 846 L1172 838 Z" fill="#474747"/>
<path d="M1115 804.8 L1202 803.5 Q1196 822 1187 833 Q1178 842.5 1158 842.5 L1122 839.5 Q1108 840 1098 852 Q1088 866 1083 888 L1075.5 884 Q1079 858 1090 842 Q1100 828 1110 820 Z" fill="#585858"/>
<path d="M1122 839.5 L1158 842.5 Q1178 842.5 1187 833" fill="none" stroke="#747474" stroke-width="1.2"/>
<path d="M1098 852 Q1088 866 1083 888 L1075.5 884 Q1079 858 1090 842 Z" fill="#646464"/>
<path d="M1142 814.6 H1165 M1139 819.2 H1163 M1136 823.8 H1161" stroke="#404040" stroke-width="1.1" fill="none"/>
<path d="M1082 829 L1108 830.5 M1086 821 L1112 822" stroke="#5e5e5e" stroke-width="2.4" fill="none"/>
</g>
<path d="M1222.5 802.5 Q1232 808 1230.5 819 Q1227 833 1204.7 837 Q1213.6 828 1213.4 818 Q1214 808 1222.5 802.5 Z" fill="#d0d000"/>
<path d="M1223.5 803.5 Q1231 809 1229.6 819 Q1226.5 831 1210 835.6" fill="none" stroke="#f2f200" stroke-width="1.6"/>
<defs><linearGradient id="gside" gradientUnits="userSpaceOnUse" x1="1236" y1="0" x2="1290" y2="0"><stop offset="0" stop-color="#d6d600"/><stop offset="1" stop-color="#e4e400"/></linearGradient><linearGradient id="gedge" gradientUnits="userSpaceOnUse" x1="0" y1="682" x2="0" y2="708"><stop offset="0" stop-color="#f4f400"/><stop offset=".5" stop-color="#ffff44"/><stop offset="1" stop-color="#d8d800"/></linearGradient></defs>
<g id="body">
<path d="M1062 600 L1255 597 Q1296 598 1316 620 Q1331 640 1337 668 L1339.5 700 L1066 700 Z" fill="#f4f400"/>
<path d="M1010 700 L1330 694 Q1340 705 1341 730 L1341 757 Q1339 776 1312 786 Q1290 795 1265 797.5 L1060 801 L906 803 L906 785 L1010 780 Z" fill="url(#gside)"/>
<path d="M1040 682 L1300 682 Q1326 680 1337 668 L1340 700 Q1341.5 712 1341.5 730 L1336 716 Q1330 706 1310 706 L1034 709 Z" fill="url(#gedge)"/>
<path d="M1318 704 Q1336 706 1340.5 726 L1341 757 Q1339 776 1312 786 Q1330 770 1330 745 Z" fill="#ecec00"/>
<rect x="1033.2" y="703.7" width="95.6" height="77.8" fill="#cccc00" stroke="#7e7a00" stroke-width="0.6"/>
<path d="M1035.9 710.5 h9.8 M1035.9 714.5 h9.8 M1035.9 718.5 h9.8 M1035.9 722.5 h9.8 M1035.9 726.5 h9.8 M1035.9 730.5 h9.8 M1035.9 734.5 h9.8 M1035.9 738.5 h9.8 M1035.9 742.5 h9.8 M1035.9 746.5 h9.8 M1035.9 750.5 h9.8 M1035.9 754.5 h9.8 M1035.9 758.5 h9.8 M1035.9 762.5 h9.8 M1035.9 766.5 h9.8 M1035.9 770.5 h9.8 M1035.9 774.5 h9.8 M1035.9 778.5 h9.8 M1048.6 710.5 h9.8 M1048.6 714.5 h9.8 M1048.6 718.5 h9.8 M1048.6 722.5 h9.8 M1048.6 726.5 h9.8 M1048.6 730.5 h9.8 M1048.6 734.5 h9.8 M1048.6 738.5 h9.8 M1048.6 742.5 h9.8 M1048.6 746.5 h9.8 M1048.6 750.5 h9.8 M1048.6 754.5 h9.8 M1048.6 758.5 h9.8 M1048.6 762.5 h9.8 M1048.6 766.5 h9.8 M1048.6 770.5 h9.8 M1048.6 774.5 h9.8 M1048.6 778.5 h9.8 M1067.8 710.5 h9.8 M1067.8 714.5 h9.8 M1067.8 718.5 h9.8 M1067.8 722.5 h9.8 M1067.8 726.5 h9.8 M1067.8 730.5 h9.8 M1067.8 734.5 h9.8 M1067.8 738.5 h9.8 M1067.8 742.5 h9.8 M1067.8 746.5 h9.8 M1067.8 750.5 h9.8 M1067.8 754.5 h9.8 M1067.8 758.5 h9.8 M1067.8 762.5 h9.8 M1067.8 766.5 h9.8 M1067.8 770.5 h9.8 M1067.8 774.5 h9.8 M1067.8 778.5 h9.8 M1080.5 710.5 h9.8 M1080.5 714.5 h9.8 M1080.5 718.5 h9.8 M1080.5 722.5 h9.8 M1080.5 726.5 h9.8 M1080.5 730.5 h9.8 M1080.5 734.5 h9.8 M1080.5 738.5 h9.8 M1080.5 742.5 h9.8 M1080.5 746.5 h9.8 M1080.5 750.5 h9.8 M1080.5 754.5 h9.8 M1080.5 758.5 h9.8 M1080.5 762.5 h9.8 M1080.5 766.5 h9.8 M1080.5 770.5 h9.8 M1080.5 774.5 h9.8 M1080.5 778.5 h9.8 M1099.7 710.5 h9.8 M1099.7 714.5 h9.8 M1099.7 718.5 h9.8 M1099.7 722.5 h9.8 M1099.7 726.5 h9.8 M1099.7 730.5 h9.8 M1099.7 734.5 h9.8 M1099.7 738.5 h9.8 M1099.7 742.5 h9.8 M1099.7 746.5 h9.8 M1099.7 750.5 h9.8 M1099.7 754.5 h9.8 M1099.7 758.5 h9.8 M1099.7 762.5 h9.8 M1099.7 766.5 h9.8 M1099.7 770.5 h9.8 M1099.7 774.5 h9.8 M1099.7 778.5 h9.8 M1112.4 710.5 h9.8 M1112.4 714.5 h9.8 M1112.4 718.5 h9.8 M1112.4 722.5 h9.8 M1112.4 726.5 h9.8 M1112.4 730.5 h9.8 M1112.4 734.5 h9.8 M1112.4 738.5 h9.8 M1112.4 742.5 h9.8 M1112.4 746.5 h9.8 M1112.4 750.5 h9.8 M1112.4 754.5 h9.8 M1112.4 758.5 h9.8 M1112.4 762.5 h9.8 M1112.4 766.5 h9.8 M1112.4 770.5 h9.8 M1112.4 774.5 h9.8 M1112.4 778.5 h9.8" stroke="#b2b200" stroke-width="1.2" fill="none"/>
<path d="M1035.9 709.2 h9.8 M1035.9 713.2 h9.8 M1035.9 717.2 h9.8 M1035.9 721.2 h9.8 M1035.9 725.2 h9.8 M1035.9 729.2 h9.8 M1035.9 733.2 h9.8 M1035.9 737.2 h9.8 M1035.9 741.2 h9.8 M1035.9 745.2 h9.8 M1035.9 749.2 h9.8 M1035.9 753.2 h9.8 M1035.9 757.2 h9.8 M1035.9 761.2 h9.8 M1035.9 765.2 h9.8 M1035.9 769.2 h9.8 M1035.9 773.2 h9.8 M1035.9 777.2 h9.8 M1048.6 709.2 h9.8 M1048.6 713.2 h9.8 M1048.6 717.2 h9.8 M1048.6 721.2 h9.8 M1048.6 725.2 h9.8 M1048.6 729.2 h9.8 M1048.6 733.2 h9.8 M1048.6 737.2 h9.8 M1048.6 741.2 h9.8 M1048.6 745.2 h9.8 M1048.6 749.2 h9.8 M1048.6 753.2 h9.8 M1048.6 757.2 h9.8 M1048.6 761.2 h9.8 M1048.6 765.2 h9.8 M1048.6 769.2 h9.8 M1048.6 773.2 h9.8 M1048.6 777.2 h9.8 M1067.8 709.2 h9.8 M1067.8 713.2 h9.8 M1067.8 717.2 h9.8 M1067.8 721.2 h9.8 M1067.8 725.2 h9.8 M1067.8 729.2 h9.8 M1067.8 733.2 h9.8 M1067.8 737.2 h9.8 M1067.8 741.2 h9.8 M1067.8 745.2 h9.8 M1067.8 749.2 h9.8 M1067.8 753.2 h9.8 M1067.8 757.2 h9.8 M1067.8 761.2 h9.8 M1067.8 765.2 h9.8 M1067.8 769.2 h9.8 M1067.8 773.2 h9.8 M1067.8 777.2 h9.8 M1080.5 709.2 h9.8 M1080.5 713.2 h9.8 M1080.5 717.2 h9.8 M1080.5 721.2 h9.8 M1080.5 725.2 h9.8 M1080.5 729.2 h9.8 M1080.5 733.2 h9.8 M1080.5 737.2 h9.8 M1080.5 741.2 h9.8 M1080.5 745.2 h9.8 M1080.5 749.2 h9.8 M1080.5 753.2 h9.8 M1080.5 757.2 h9.8 M1080.5 761.2 h9.8 M1080.5 765.2 h9.8 M1080.5 769.2 h9.8 M1080.5 773.2 h9.8 M1080.5 777.2 h9.8 M1099.7 709.2 h9.8 M1099.7 713.2 h9.8 M1099.7 717.2 h9.8 M1099.7 721.2 h9.8 M1099.7 725.2 h9.8 M1099.7 729.2 h9.8 M1099.7 733.2 h9.8 M1099.7 737.2 h9.8 M1099.7 741.2 h9.8 M1099.7 745.2 h9.8 M1099.7 749.2 h9.8 M1099.7 753.2 h9.8 M1099.7 757.2 h9.8 M1099.7 761.2 h9.8 M1099.7 765.2 h9.8 M1099.7 769.2 h9.8 M1099.7 773.2 h9.8 M1099.7 777.2 h9.8 M1112.4 709.2 h9.8 M1112.4 713.2 h9.8 M1112.4 717.2 h9.8 M1112.4 721.2 h9.8 M1112.4 725.2 h9.8 M1112.4 729.2 h9.8 M1112.4 733.2 h9.8 M1112.4 737.2 h9.8 M1112.4 741.2 h9.8 M1112.4 745.2 h9.8 M1112.4 749.2 h9.8 M1112.4 753.2 h9.8 M1112.4 757.2 h9.8 M1112.4 761.2 h9.8 M1112.4 765.2 h9.8 M1112.4 769.2 h9.8 M1112.4 773.2 h9.8 M1112.4 777.2 h9.8" stroke="#f4f420" stroke-width="1.5" fill="none"/>
<rect x="1143.8" y="702.4" width="95.6" height="78.0" fill="#cccc00" stroke="#7e7a00" stroke-width="0.6"/>
<path d="M1148.5 709.2 h9.8 M1148.5 713.2 h9.8 M1148.5 717.2 h9.8 M1148.5 721.2 h9.8 M1148.5 725.2 h9.8 M1148.5 729.2 h9.8 M1148.5 733.2 h9.8 M1148.5 737.2 h9.8 M1148.5 741.2 h9.8 M1148.5 745.2 h9.8 M1148.5 749.2 h9.8 M1148.5 753.2 h9.8 M1148.5 757.2 h9.8 M1148.5 761.2 h9.8 M1148.5 765.2 h9.8 M1148.5 769.2 h9.8 M1148.5 773.2 h9.8 M1148.5 777.2 h9.8 M1161.2 709.2 h9.8 M1161.2 713.2 h9.8 M1161.2 717.2 h9.8 M1161.2 721.2 h9.8 M1161.2 725.2 h9.8 M1161.2 729.2 h9.8 M1161.2 733.2 h9.8 M1161.2 737.2 h9.8 M1161.2 741.2 h9.8 M1161.2 745.2 h9.8 M1161.2 749.2 h9.8 M1161.2 753.2 h9.8 M1161.2 757.2 h9.8 M1161.2 761.2 h9.8 M1161.2 765.2 h9.8 M1161.2 769.2 h9.8 M1161.2 773.2 h9.8 M1161.2 777.2 h9.8 M1180.4 709.2 h9.8 M1180.4 713.2 h9.8 M1180.4 717.2 h9.8 M1180.4 721.2 h9.8 M1180.4 725.2 h9.8 M1180.4 729.2 h9.8 M1180.4 733.2 h9.8 M1180.4 737.2 h9.8 M1180.4 741.2 h9.8 M1180.4 745.2 h9.8 M1180.4 749.2 h9.8 M1180.4 753.2 h9.8 M1180.4 757.2 h9.8 M1180.4 761.2 h9.8 M1180.4 765.2 h9.8 M1180.4 769.2 h9.8 M1180.4 773.2 h9.8 M1180.4 777.2 h9.8 M1193.1 709.2 h9.8 M1193.1 713.2 h9.8 M1193.1 717.2 h9.8 M1193.1 721.2 h9.8 M1193.1 725.2 h9.8 M1193.1 729.2 h9.8 M1193.1 733.2 h9.8 M1193.1 737.2 h9.8 M1193.1 741.2 h9.8 M1193.1 745.2 h9.8 M1193.1 749.2 h9.8 M1193.1 753.2 h9.8 M1193.1 757.2 h9.8 M1193.1 761.2 h9.8 M1193.1 765.2 h9.8 M1193.1 769.2 h9.8 M1193.1 773.2 h9.8 M1193.1 777.2 h9.8 M1212.3 709.2 h9.8 M1212.3 713.2 h9.8 M1212.3 717.2 h9.8 M1212.3 721.2 h9.8 M1212.3 725.2 h9.8 M1212.3 729.2 h9.8 M1212.3 733.2 h9.8 M1212.3 737.2 h9.8 M1212.3 741.2 h9.8 M1212.3 745.2 h9.8 M1212.3 749.2 h9.8 M1212.3 753.2 h9.8 M1212.3 757.2 h9.8 M1212.3 761.2 h9.8 M1212.3 765.2 h9.8 M1212.3 769.2 h9.8 M1212.3 773.2 h9.8 M1212.3 777.2 h9.8 M1225.0 709.2 h9.8 M1225.0 713.2 h9.8 M1225.0 717.2 h9.8 M1225.0 721.2 h9.8 M1225.0 725.2 h9.8 M1225.0 729.2 h9.8 M1225.0 733.2 h9.8 M1225.0 737.2 h9.8 M1225.0 741.2 h9.8 M1225.0 745.2 h9.8 M1225.0 749.2 h9.8 M1225.0 753.2 h9.8 M1225.0 757.2 h9.8 M1225.0 761.2 h9.8 M1225.0 765.2 h9.8 M1225.0 769.2 h9.8 M1225.0 773.2 h9.8 M1225.0 777.2 h9.8" stroke="#b2b200" stroke-width="1.2" fill="none"/>
<path d="M1148.5 707.9 h9.8 M1148.5 711.9 h9.8 M1148.5 715.9 h9.8 M1148.5 719.9 h9.8 M1148.5 723.9 h9.8 M1148.5 727.9 h9.8 M1148.5 731.9 h9.8 M1148.5 735.9 h9.8 M1148.5 739.9 h9.8 M1148.5 743.9 h9.8 M1148.5 747.9 h9.8 M1148.5 751.9 h9.8 M1148.5 755.9 h9.8 M1148.5 759.9 h9.8 M1148.5 763.9 h9.8 M1148.5 767.9 h9.8 M1148.5 771.9 h9.8 M1148.5 775.9 h9.8 M1161.2 707.9 h9.8 M1161.2 711.9 h9.8 M1161.2 715.9 h9.8 M1161.2 719.9 h9.8 M1161.2 723.9 h9.8 M1161.2 727.9 h9.8 M1161.2 731.9 h9.8 M1161.2 735.9 h9.8 M1161.2 739.9 h9.8 M1161.2 743.9 h9.8 M1161.2 747.9 h9.8 M1161.2 751.9 h9.8 M1161.2 755.9 h9.8 M1161.2 759.9 h9.8 M1161.2 763.9 h9.8 M1161.2 767.9 h9.8 M1161.2 771.9 h9.8 M1161.2 775.9 h9.8 M1180.4 707.9 h9.8 M1180.4 711.9 h9.8 M1180.4 715.9 h9.8 M1180.4 719.9 h9.8 M1180.4 723.9 h9.8 M1180.4 727.9 h9.8 M1180.4 731.9 h9.8 M1180.4 735.9 h9.8 M1180.4 739.9 h9.8 M1180.4 743.9 h9.8 M1180.4 747.9 h9.8 M1180.4 751.9 h9.8 M1180.4 755.9 h9.8 M1180.4 759.9 h9.8 M1180.4 763.9 h9.8 M1180.4 767.9 h9.8 M1180.4 771.9 h9.8 M1180.4 775.9 h9.8 M1193.1 707.9 h9.8 M1193.1 711.9 h9.8 M1193.1 715.9 h9.8 M1193.1 719.9 h9.8 M1193.1 723.9 h9.8 M1193.1 727.9 h9.8 M1193.1 731.9 h9.8 M1193.1 735.9 h9.8 M1193.1 739.9 h9.8 M1193.1 743.9 h9.8 M1193.1 747.9 h9.8 M1193.1 751.9 h9.8 M1193.1 755.9 h9.8 M1193.1 759.9 h9.8 M1193.1 763.9 h9.8 M1193.1 767.9 h9.8 M1193.1 771.9 h9.8 M1193.1 775.9 h9.8 M1212.3 707.9 h9.8 M1212.3 711.9 h9.8 M1212.3 715.9 h9.8 M1212.3 719.9 h9.8 M1212.3 723.9 h9.8 M1212.3 727.9 h9.8 M1212.3 731.9 h9.8 M1212.3 735.9 h9.8 M1212.3 739.9 h9.8 M1212.3 743.9 h9.8 M1212.3 747.9 h9.8 M1212.3 751.9 h9.8 M1212.3 755.9 h9.8 M1212.3 759.9 h9.8 M1212.3 763.9 h9.8 M1212.3 767.9 h9.8 M1212.3 771.9 h9.8 M1212.3 775.9 h9.8 M1225.0 707.9 h9.8 M1225.0 711.9 h9.8 M1225.0 715.9 h9.8 M1225.0 719.9 h9.8 M1225.0 723.9 h9.8 M1225.0 727.9 h9.8 M1225.0 731.9 h9.8 M1225.0 735.9 h9.8 M1225.0 739.9 h9.8 M1225.0 743.9 h9.8 M1225.0 747.9 h9.8 M1225.0 751.9 h9.8 M1225.0 755.9 h9.8 M1225.0 759.9 h9.8 M1225.0 763.9 h9.8 M1225.0 767.9 h9.8 M1225.0 771.9 h9.8 M1225.0 775.9 h9.8" stroke="#f4f420" stroke-width="1.5" fill="none"/>
<path d="M1278.7 709.3 L1307.2 702.6 Q1314 702.5 1315.3 709 L1316 751.4 Q1315.5 757 1311.3 759.6 L1271 774.5 Q1260 776.5 1257 769 L1255.6 742 Q1255.6 737 1260 731.5 Z" fill="#c3c346"/>
<path d="M1316 712 L1316 751.4 Q1315.5 757 1311.3 759.6 L1271 774.5 Q1260 776.5 1257 769 L1255.8 748" fill="none" stroke="#ffff38" stroke-width="2.6"/>
<path d="M1255.8 748 L1255.6 742 Q1255.6 737 1260 731.5 L1278.7 709.3 L1307.2 702.6 Q1314 702.5 1315.5 712" fill="none" stroke="#4a4600" stroke-width="0.9"/>
<path d="M1301 705 L1313 706 L1314 722 Z" fill="#8c8c50"/>
<path d="M1262 729.6 H1314 V733.6 H1259 Z M1257 759.4 H1310 L1300 763.6 H1257.6 Z" fill="#a6a63c"/>
<path d="M904 786 Q903 794 907 803 L1060 801.5 L1265 798 Q1292 795 1313 786.5 Q1338 776 1341.5 757 L1338 735 Q1336 760 1318 772 Q1296 786 1262 787.5 L1060 785 Z" fill="#e9e900"/>
<path d="M908 789 L1060 788 L1262 790.5 Q1298 788 1320 775 Q1336 764 1338 745" stroke="#ffff48" stroke-width="2.2" fill="none"/>
<path d="M938 789 L1024 788 Q1027 795 1022 802.5 L942 803.5 Q936 798 938 789 Z" fill="#dcdc28"/>
<path d="M940 791 H1022 M939 794 H1024 M939 797 H1024 M941 800 H1022" stroke="#b4b400" stroke-width="1" stroke-dasharray="1.5 1.5" fill="none"/>
<path d="M1075 612.5 L1082.5 640 L1110 657.5" stroke="#55520a" stroke-width="1" fill="none"/>
<path d="M1080 666 L1083 680 H1142 V666" stroke="#8a8400" stroke-width="0.8" fill="none"/>
</g>
<g id="engine">
<path d="M1156 655 L1296 648 L1297.5 673.5 L1159 675.5 Z" fill="#1e1e1e"/>
<path d="M1175 668 L1272 664.5" stroke="#3e3e3e" stroke-width="11" stroke-dasharray="1 1.7" fill="none"/>
<path d="M1284 652 L1297 650 L1297.5 673 L1287 673.5 Z" fill="#2c2c2c"/>
<path d="M1155 582 L1255.6 582.6 Q1262 583 1265 589 L1292.5 645 Q1294 651.5 1287 652 L1172 657 Q1163 657 1160 650.5 L1145 606 L1146.5 594 Q1149 584 1155 582 Z" fill="#393939"/>
<path d="M1145 606 L1160 650.5 Q1163 657 1172 657 L1287 652 Q1294 651.5 1292.5 645 L1275.5 645 L1172 649 L1158 600 L1165 583 L1155 582 Q1149 584 1146.5 594 Z" fill="#2b2b2b"/>
<path d="M1172 648.2 L1275 644.3" stroke="#8a8a8a" stroke-width="1.4" fill="none"/>
<path d="M1165 584 L1158.5 600 L1172 648" stroke="#4c4c4c" stroke-width="1" fill="none"/>
<rect x="1165.5" y="586.6" width="81.0" height="5.4" rx="2.7" fill="#303030" stroke="#484848" stroke-width="0.7"/>
<path d="M1173.5 592.2 H1243.5" stroke="#9a9a9a" stroke-width="1.1" fill="none"/>
<circle cx="1173.6" cy="587.8" r="0.9" fill="#777"/>
<circle cx="1204.4" cy="587.8" r="0.9" fill="#777"/>
<circle cx="1235.2" cy="587.8" r="0.9" fill="#777"/>
<rect x="1168.1" y="596.5" width="81.3" height="5.4" rx="2.7" fill="#303030" stroke="#484848" stroke-width="0.7"/>
<path d="M1176.1 602.1 H1246.4" stroke="#9a9a9a" stroke-width="1.1" fill="none"/>
<circle cx="1176.2" cy="597.7" r="0.9" fill="#777"/>
<circle cx="1207.1" cy="597.7" r="0.9" fill="#777"/>
<circle cx="1238.0" cy="597.7" r="0.9" fill="#777"/>
<rect x="1170.7" y="606.4" width="81.6" height="5.4" rx="2.7" fill="#303030" stroke="#484848" stroke-width="0.7"/>
<path d="M1178.7 612.0 H1249.3" stroke="#9a9a9a" stroke-width="1.1" fill="none"/>
<circle cx="1178.9" cy="607.6" r="0.9" fill="#777"/>
<circle cx="1209.9" cy="607.6" r="0.9" fill="#777"/>
<circle cx="1240.9" cy="607.6" r="0.9" fill="#777"/>
<rect x="1173.3" y="616.3" width="81.9" height="5.4" rx="2.7" fill="#303030" stroke="#484848" stroke-width="0.7"/>
<path d="M1181.3 621.9 H1252.2" stroke="#9a9a9a" stroke-width="1.1" fill="none"/>
<circle cx="1181.5" cy="617.5" r="0.9" fill="#777"/>
<circle cx="1212.6" cy="617.5" r="0.9" fill="#777"/>
<circle cx="1243.7" cy="617.5" r="0.9" fill="#777"/>
<rect x="1175.9" y="626.2" width="82.2" height="5.4" rx="2.7" fill="#303030" stroke="#484848" stroke-width="0.7"/>
<path d="M1183.9 631.8 H1255.1" stroke="#9a9a9a" stroke-width="1.1" fill="none"/>
<circle cx="1184.1" cy="627.4" r="0.9" fill="#777"/>
<circle cx="1215.4" cy="627.4" r="0.9" fill="#777"/>
<circle cx="1246.6" cy="627.4" r="0.9" fill="#777"/>
<rect x="1178.5" y="636.1" width="82.5" height="5.4" rx="2.7" fill="#303030" stroke="#484848" stroke-width="0.7"/>
<path d="M1186.5 641.7 H1258.0" stroke="#9a9a9a" stroke-width="1.1" fill="none"/>
<circle cx="1186.8" cy="637.3" r="0.9" fill="#777"/>
<circle cx="1218.1" cy="637.3" r="0.9" fill="#777"/>
<circle cx="1249.5" cy="637.3" r="0.9" fill="#777"/>
</g>
<g id="rail" stroke-linecap="round">
<path d="M1064 578.5 L1245 575.5 Q1282 577 1303 594 Q1322 612 1323 630 Q1322 642 1312 647" stroke="#d4d400" stroke-width="3.4" fill="none"/>
<path d="M1064 577.8 L1245 574.8 Q1282 576 1303 593 Q1321 611 1322 629" stroke="#f8f820" stroke-width="1.3" fill="none"/>
<line x1="1091" y1="579" x2="1091" y2="600" stroke="#d8d800" stroke-width="2.6"/>
<line x1="1132.5" y1="578.5" x2="1132.5" y2="600" stroke="#d8d800" stroke-width="2.6"/>
<line x1="1173.5" y1="577.5" x2="1173.5" y2="583" stroke="#d8d800" stroke-width="2.6"/>
<line x1="1215.5" y1="577" x2="1215.5" y2="582" stroke="#d8d800" stroke-width="2.6"/>
<line x1="1262.5" y1="578" x2="1262.5" y2="583" stroke="#d8d800" stroke-width="2.6"/>
<line x1="1300" y1="593" x2="1300" y2="612" stroke="#d8d800" stroke-width="2.6"/>
<line x1="1315" y1="608" x2="1315" y2="636" stroke="#d8d800" stroke-width="2.6"/>
<path d="M1080 662.5 L1195 663.5 Q1250 661 1290 652 Q1312 646 1321 634" stroke="#dada00" stroke-width="3.4" fill="none"/>
<path d="M1080 661.8 L1195 662.8 Q1250 660 1290 651 Q1311 645 1320 633" stroke="#fcfc30" stroke-width="1.3" fill="none"/>
<line x1="1107.5" y1="664" x2="1107.5" y2="685" stroke="#dcdc00" stroke-width="2.8"/>
<line x1="1151" y1="664" x2="1151" y2="685" stroke="#dcdc00" stroke-width="2.8"/>
<line x1="1195" y1="665" x2="1195" y2="685" stroke="#dcdc00" stroke-width="2.8"/>
<line x1="1237.5" y1="663" x2="1237.5" y2="684" stroke="#dcdc00" stroke-width="2.8"/>
<line x1="1285" y1="655" x2="1285" y2="678" stroke="#dcdc00" stroke-width="2.8"/>
<line x1="1317.5" y1="640" x2="1317.5" y2="664" stroke="#dcdc00" stroke-width="2.8"/>
</g>
<g id="bucket">
<path d="M533 539 Q590 570 676 545 L672 596 Q668 603 660 603 Q600 618 565 610 Q535 600 518 588 Z" fill="#2a2a2a"/>
<path d="M650 562 L672 596 L664 602 L612 612 Z" fill="#262626"/>
<path d="M533 539 Q590 570 676 545" fill="none" stroke="#6a6a6a" stroke-width="1"/>
<path d="M675 546 L671 596" fill="none" stroke="#3c3c3c" stroke-width="3" stroke-dasharray="2 2.5"/>
<path d="M662 556 L659 600" fill="none" stroke="#383838" stroke-width="1" stroke-dasharray="2 2"/>
<path d="M518 588 Q560 612 620 611 Q650 608 668 600 L636 634 L590 680 Q575 698 552 696 Q510 685 476 647 L472 630 Z" fill="#2f2f2f"/>
<path d="M500 600 Q560 645 632 638 L590 680 Q575 698 552 696 Q510 685 476 647 Z" fill="#2c2c2c"/>
<path d="M500 600 Q560 645 632 638" fill="none" stroke="#222" stroke-width="1"/>
<path d="M476 647 Q510 685 552 696 Q575 698 590 680 L668 600" fill="none" stroke="#3a3a3a" stroke-width="1"/>
<path d="M518 587 Q560 612 620 611 Q650 608 668 600" fill="none" stroke="#5e5e5e" stroke-width="1.6"/>
<path d="M535 596 Q575 613 610 612" fill="none" stroke="#777" stroke-width="2" stroke-dasharray="1.2 1.2"/>
</g>
<g id="rod1">
<line x1="580" y1="215.5" x2="713" y2="287.5" stroke="#8c8c8c" stroke-width="6"/>
<line x1="580.8" y1="214" x2="713.8" y2="286" stroke="#d6d6d6" stroke-width="2.4"/>
</g>
<g id="cyl2">
<path d="M483 290 L498 296 L497.5 304 L480.5 301 Z" fill="#dada00"/>
<ellipse cx="489" cy="301.2" rx="8.2" ry="2.4" transform="rotate(10 489 301.2)" fill="#f2f200"/>
<path d="M481 300 L497 303 L474 434 L456.5 431 Z" fill="#c4c400"/>
<path d="M481 300 L485 301 L461 432 L456.5 431 Z" fill="#e0e000"/>
<path d="M486.5 304 L463.3 431" stroke="#3a3010" stroke-width="2.3" fill="none"/>
<path d="M492.7 305 L469.7 432" stroke="#3a3010" stroke-width="2.3" fill="none"/>
<path d="M456.5 431 L474 434 L473 442 L458 440 Z" fill="#dcdc00"/>
<circle cx="464.5" cy="437.5" r="1.6" fill="#d0d0ff"/>
<circle cx="487.5" cy="306.5" r="1.8" fill="#c8c8c8"/>
<line x1="463.8" y1="442" x2="449.8" y2="522" stroke="#8a8a8a" stroke-width="7"/>
<line x1="462" y1="442" x2="448" y2="522" stroke="#b0b0b0" stroke-width="2.4"/>
</g>
<defs><linearGradient id="gst1" gradientUnits="userSpaceOnUse" x1="0" y1="240" x2="0" y2="420"><stop offset="0" stop-color="#cccc00"/><stop offset="1" stop-color="#c0c000"/></linearGradient><linearGradient id="gst2" gradientUnits="userSpaceOnUse" x1="0" y1="245" x2="0" y2="350"><stop offset="0" stop-color="#c8c800"/><stop offset="1" stop-color="#b8b800"/></linearGradient></defs>
<g id="stick">
<path d="M483.5 282 L562.5 204.5 Q571 197.5 580 208 L599 286 L589 335 L574.5 390 L560 440 L546 490 L526.5 561 L496.5 556 L499 490 L505 390 L507.5 320 Q504 307 495 299 Q483 297 482.5 288 Z" fill="#d4d400"/>
<path d="M484.5 282 L563 205.5 Q571 199 579 208.5" fill="none" stroke="#f4f400" stroke-width="2.6"/>
<path d="M576 212 L580 208 L599 286 L596 290 Z" fill="#e6e600"/>
<path d="M507.5 320 L511.5 300 L511 400 L504 520 L496.5 556 L499 490 L505 390 Z" fill="#c9c900"/>
<path d="M511 440 L511.5 276 Q513 258 530 244 Q548 231 561 238.5 L597 291 L589 335 L574.5 390 L560 440 L546 490 L526.5 561 L500 557 L504 500 Z" fill="url(#gst1)"/>
<path d="M511.5 288 L511.5 276 Q513 258 530 244 Q548 231 561 238.5 L597 291" fill="none" stroke="#f0f000" stroke-width="3.4"/>
<path d="M585 289 L597 291 L589 335 L574.5 390 L560 440 L558.8 410 L581 332 Z" fill="#cece00"/>
<path d="M521 276 Q522 256 538 247 Q550 240 557 247 L585 289 L581 332 L558.8 410 L515.6 367.5 Z" fill="url(#gst2)" stroke="#6a6400" stroke-width="0.7"/>
<path d="M515.6 367.5 L558.8 410" stroke="#f0f000" stroke-width="1.8" fill="none"/>
<path d="M512 442.5 L546 454 L527.5 519 L519 550 L506 548 L508 519 Z" fill="none" stroke="#6a6400" stroke-width="0.7"/>
</g>
<circle cx="570" cy="215.6" r="5" fill="#d4d4d4"/>
<circle cx="491.9" cy="287.5" r="6" fill="#d8d8d8"/>
<g id="boom">
<path d="M656 312.5 L835 380 L855 361 Q863 354.5 871 363.5 L915.5 406 Q937 413 956 427.5 Q975 445 990 467.5 Q1001 490 1006 509 Q1009 530 1009 546 L943 546 Q940 528 930 508.5 Q920 492 905 480 Q896 474 887.5 470 L642 348 Z" fill="#c6c600"/>
<path d="M656 312.5 L835 380 L827 387.5 L656.5 324 Z" fill="#e4e400"/>
<path d="M657 323 L827.5 386.5" stroke="#ffff38" stroke-width="2.6" fill="none"/>
<path d="M656.5 313.5 L835 381" stroke="#f8f820" stroke-width="1.6" fill="none"/>
<path d="M663 318 L820 377" stroke="#4a4600" stroke-width="1" fill="none"/>
<path d="M835 380 L855 361 Q863 354.5 871 363.5 L915.5 406 L908 406.5 L829 384 Z" fill="#caca00"/>
<path d="M871 363.5 L915.5 406 L910 407 L866 366 Z" fill="#f4f420"/>
<path d="M829 384 L908 407" stroke="#ffff30" stroke-width="2" fill="none"/>
<path d="M915.5 406 Q937 413 956 427.5 Q975 445 990 467.5 Q1001 490 1006 509 Q1009 530 1009 546 L1001 546 Q1001 528 998 511 Q993 490 983 471 Q969 450 951 435 Q933 420 908 407 Z" fill="#f0f000"/>
<path d="M908 407 Q933 420 951 435 Q969 450 983 471 Q993 490 998 511 Q1001 528 1001 546" stroke="#ffff40" stroke-width="2.2" fill="none"/>
<path d="M642 348 L887.5 470 Q905 480 920 492 Q930 508 940 528 L943 546" stroke="#e2e200" stroke-width="3" fill="none"/>
<path d="M690 353 Q690 346 697 347.5 L908.5 423.5 Q919 427 918 433 Q912 443 907.5 455 Q906 462 902 464 Q898 465 893 462.5 L694 366 Q690 363 690 358 Z" fill="#bcbc00" stroke="#5e5a00" stroke-width="0.8"/>
<path d="M690.5 352 Q689.5 362 694.5 366.5 L893 462.8 Q899 465.5 903.5 463" stroke="#fafa28" stroke-width="2.6" fill="none"/>
<path d="M955 506 Q978 503 988 492 Q996 495 998 520 L999 546" stroke="#5e5a00" stroke-width="0.8" fill="none"/>
</g>
<g id="pin2">
<line x1="952" y1="470" x2="949.5" y2="545" stroke="#969696" stroke-width="7"/>
<line x1="950.8" y1="470" x2="947.8" y2="545" stroke="#c4c4c4" stroke-width="2.2"/>
<circle cx="952.5" cy="465" r="12.5" fill="#cdcd00" stroke="#e8e800" stroke-width="1"/>
<circle cx="952.5" cy="465.5" r="10" fill="#c4c4c4" stroke="#6a6a6a" stroke-width="1"/>
<circle cx="952.5" cy="467.5" r="5.6" fill="#e6e6e6" stroke="#7a7a7a" stroke-width="0.9"/>
<circle cx="952.5" cy="467" r="2.3" fill="#d0d0d0" stroke="#999" stroke-width="0.6"/>
</g>
<circle cx="861.5" cy="373.8" r="7" fill="#d4d4d4"/>
<g id="lug">
<path d="M565 287.5 L599 293 L599 283.5 L657 299.5 L655 314 L636.5 360 L559 315.5 Q551.5 309 552.5 302 Q554.5 290 565 287.5 Z" fill="#c6c600"/>
<path d="M599 283.5 L657 299.5 L655 314 L599 293 Z" fill="#e6e600"/>
<path d="M599 283.5 L657 299.5" stroke="#f6f620" stroke-width="2" fill="none"/>
<path d="M603 289.5 L646 302.5 L646 307 L603 293 Z" fill="#cfcf00"/>
<path d="M647 301.5 L652 303 L651.5 308.5 L646.5 307 Z" fill="#a0a000" stroke="#eeee00" stroke-width="0.8"/>
<path d="M556 296 Q558 289 566 288.5 L599 294 L655 314.5" stroke="#f4f408" stroke-width="4" fill="none"/>
<path d="M655 314 L636.5 360 L634 358.5 L652 313.5 Z" fill="#e0e000"/>
<path d="M652 313.5 L634 358.5" stroke="#6a6400" stroke-width="0.6" fill="none"/>
<path d="M554 305 Q555 313 562 317 L634 358.5" stroke="#dede00" stroke-width="2" fill="none"/>
<circle cx="567.8" cy="305.8" r="8" fill="#d8d8d8"/>
</g>
<g id="cyl1">
<path d="M715 280.5 L851.8 355 L843.5 368.5 L705.5 299 L709 288 Z" fill="#c6c600"/>
<path d="M715 280.5 L851.8 355 L848.2 361.8 L710.6 290.4 Z" fill="#f0f000"/>
<path d="M709 288 L711 290.6 L707.6 298.6 L705.5 299 Z" fill="#dcdc00"/>
<path d="M711 290.6 L848 361.6" stroke="#40381c" stroke-width="1.8" fill="none"/>
<path d="M707.8 298.4 L843.6 367.2" stroke="#40381c" stroke-width="1.8" fill="none"/>
<path d="M711 290.6 L848 361.6 M707.8 298.4 L843.6 367.2" stroke="#a8a8a0" stroke-width="0.9" stroke-dasharray="0.9 1.3" fill="none"/>
<path d="M848 361.6 L843.6 367.2" stroke="#40381c" stroke-width="2.4" fill="none"/>
<path d="M711 290.6 L707.8 298.4" stroke="#40381c" stroke-width="1.6" fill="none"/>
</g>
<g id="link">
<path d="M443.5 541 L461 536 L486 574 L474 592 Z" fill="#c8c800"/>
<path d="M457 537 L461 536 L486 574 L483 578 Z" fill="#f0f000"/>
<path d="M453 538.5 L480.5 581" stroke="#eeee00" stroke-width="1.2" fill="none"/>
<line x1="498" y1="499.5" x2="453" y2="520.5" stroke="#d0d000" stroke-width="6.4"/>
<line x1="498" y1="498" x2="453" y2="519" stroke="#f4f410" stroke-width="1.6"/>
<line x1="513" y1="508" x2="450" y2="536" stroke="#d0d000" stroke-width="6.4"/>
<line x1="513" y1="506.5" x2="450" y2="534.5" stroke="#f4f410" stroke-width="1.6"/>
<circle cx="449" cy="529.5" r="11.5" fill="#d8d800"/>
<circle cx="449.5" cy="528" r="6.5" fill="none" stroke="#a8a800" stroke-width="1.2"/>
<circle cx="448" cy="532" r="6" fill="#e0e000"/>
<circle cx="446.3" cy="536.3" r="3.4" fill="#d6d6e6"/>
<circle cx="513.3" cy="507.5" r="5.2" fill="#e8e800"/>
<circle cx="513.3" cy="507.5" r="3.6" fill="#d4d4dc"/>
</g>
<g id="bbr">
<path d="M499 553 Q509 545 519 552 Q525 558 521 568 L508 590 L492 622 L478 640 Q470 628 470 612 Q470 600 476 592 Z" fill="#232323"/>
<path d="M521 568 L508 590 L494 620 L500 600 L516 560 Z" fill="#1a1a1a"/>
<circle cx="510" cy="563.8" r="8" fill="#d4d4d4"/>
<circle cx="482.2" cy="603.2" r="8" fill="#d4d4d4"/>
</g>
<g id="cab">
<path d="M927 578 L1058 577 L1067 680 L1038 682 Q1010 715 955 737 L917 747 Q905 735 906 700 Q908 650 927 578 Z" fill="#444"/>
<path d="M923 580 L929 579 Q914 630 909.5 681 Q906 740 908 800 L899 800 Q895 740 898.5 690 Q904 630 923 580 Z" fill="#3a3a3a"/>
<path d="M947 580 L997 580 L997 690 L976 691 L972 700 L940 708 L922 688 Q926 640 947 580 Z" fill="#c2c252"/>
<path d="M975 582 L996 582 L996 640 Q985 630 975 582 Z" fill="#d0d068"/>
<path d="M958 580 L972 580 Q966 640 958 690 L945 695 Q950 640 958 580 Z" fill="#a8a848"/>
<path d="M960 582 L975 582 Q980 625 992 650 L980 690 L962 690 Q968 640 960 582 Z" fill="#cbcb5c"/>
<path d="M951 600 Q948 650 944 690 M955 600 Q953 650 949 690" stroke="#8c8c58" stroke-width="1.2" fill="none"/>
<path d="M1007.5 580 L1038 579 L1045 654 Q1040 690 1010 712 L1007.5 712 Z" fill="#8e8e8e"/>
<path d="M1007.5 602 L1039 601 L1045 654 Q1040 690 1010 712 L1007.5 712 Z" fill="#d2d25e"/>
<path d="M1024 640 Q1034 650 1030 680 Q1024 700 1010 712 L1040 690 Q1046 670 1044 640 Z" fill="#9a9a60"/>
<path d="M966 688 Q975 676 992 682 L993 700 L960 712 Z" fill="#c6c6dc"/>
<path d="M978 691 L1000 691 L1000 712.5 L982 712 Q976 710 976 704 Z" fill="#b4b41a"/>
<path d="M978 691 L1000 691 L1000 697 L977 698 Z" fill="#8e8e10"/>
<path d="M954 719 L977 715 L977 725.5 L954 726 Z" fill="#d4d400"/>
<path d="M920 720 Q935 714 945 722 L956 735 L925 745 Z" fill="#4e4e4e"/>
<path d="M956 670 L938.5 706" stroke="#c6c600" stroke-width="3" fill="none"/>
<path d="M966 676 L949 712" stroke="#c6c600" stroke-width="3" fill="none"/>
<path d="M958 672 L946 700 L952 704 L964 678 Z" fill="#4a4a4a"/>
<ellipse cx="966" cy="664" rx="21" ry="7.5" transform="rotate(33 966 664)" fill="none" stroke="#0a0a0a" stroke-width="2.8"/>
<path d="M963 662 L966 651 M966 651 L963.5 649.5 M966 651 L968 649" stroke="#0a0a0a" stroke-width="1.6" fill="none"/>
<path d="M917.5 747 Q955 739 980 727.5 Q1005 715 1023.5 700 Q1034 690 1038.5 681 L1066 680 L1066 700 L1034 704 L1034 780 L1010 782 L908 786 Q905 770 907 752 Z" fill="#d2d200"/>
<path d="M1010 716 V782" stroke="#aaa800" stroke-width="0.8"/>
<path d="M1038.5 681 L1066 680 L1066 700 L1034 706 L1034 694 Z" fill="#eaea00"/>
<path d="M956 756 L983.5 748 L984 759.5 L959 760.5 Q955 759 956 756 Z" fill="#484848"/>
<path d="M898.5 694 L904 690 Q903 740 906.5 778 Q908 788 916 789 L916 802.5 L908 802.5 Q901.5 800 900.5 790 Q896.5 745 898.5 694 Z" fill="#e8e800"/>
<path d="M899.5 700 Q898 745 901.5 788" stroke="#ffff50" stroke-width="1.2" fill="none"/>
<path d="M927.5 578.5 L948 580 Q945.5 600 942.3 614.6 Q936 634 930 650 Q925.5 666 923.4 681.4 Q920.5 705 920 726 L918.5 786 L907.8 786 Q906.2 760 906.7 737 Q907 705 908.9 681.4 Q912.5 650 917.8 625.7 Q922 602 927.5 578.5 Z" fill="#000"/>
<path d="M997 580 L1007.5 580 L1007.5 716 L1000.5 719 L1000.5 650 Z" fill="#000"/>
<path d="M997 580 L1002 580 L1002 650 L997 650 Z" fill="#2c2c2c"/>
<path d="M1037.5 578.5 L1058.8 577.5 L1067.5 654 L1066 681 L1038.5 682 Q1046 665 1045 654 Z" fill="#000"/>
<path d="M923 576.5 L1058.5 577 L1058.5 580.5 L926 581 Z" fill="#000"/>
<path d="M950 543.5 L1046 543 Q1054 545 1056 554 L1058.5 576 Q1000 572 924 576 Q918 576 920 570 L945 566 Z" fill="#f0f000"/>
<path d="M924 575 Q1000 571 1058 575.5" stroke="#ffff50" stroke-width="3" fill="none"/>
<path d="M917 535.5 L943 537.5 Q949.5 540 948.5 546 L947 548 L950 556 Q952.5 566 950 571.5 L924 574 Q918.5 573 918.5 566 L918.5 552 L917 548 Z" fill="#f0f000"/>
<path d="M917 535.5 L942 537.5 Q950 541 947.5 547.5 L919 548.5 Z" fill="#f6f610"/>
<path d="M918.5 544.5 L948 544 Q948 548 944 548.5 L919 549 Z" fill="#b4b400"/>
<path d="M920 549.5 L944 549.5 L946 559.5 L921 560.5 Z" fill="#e4e400"/>
<path d="M920.5 560.5 L946 560 Q952 563 951 569 Q950 572 946 572 L923 573.5 Q919.5 572 919.5 567 Z" fill="#f6f610"/>
<path d="M921 568.5 L950.5 567.5 Q950 572 946 572 L923 573.5 Q920.5 572.5 921 568.5 Z" fill="#bcbc00"/>
<path d="M959 541 L992.5 540 L1026 548.5 L1029 568 L962.5 569 L961 555 Z" fill="#2f2f2f"/>
<path d="M959 541 L992.5 540 L1026 548.5 L1029 567 L1000 561 L967.5 561 Z" fill="#414141"/>
<path d="M967.5 561 L1000 561 L1029 567.5" stroke="#d8d8d8" stroke-width="1" fill="none"/>
</g>
</svg>
<div id="dim">*Dimetric</div>
</body></html>
